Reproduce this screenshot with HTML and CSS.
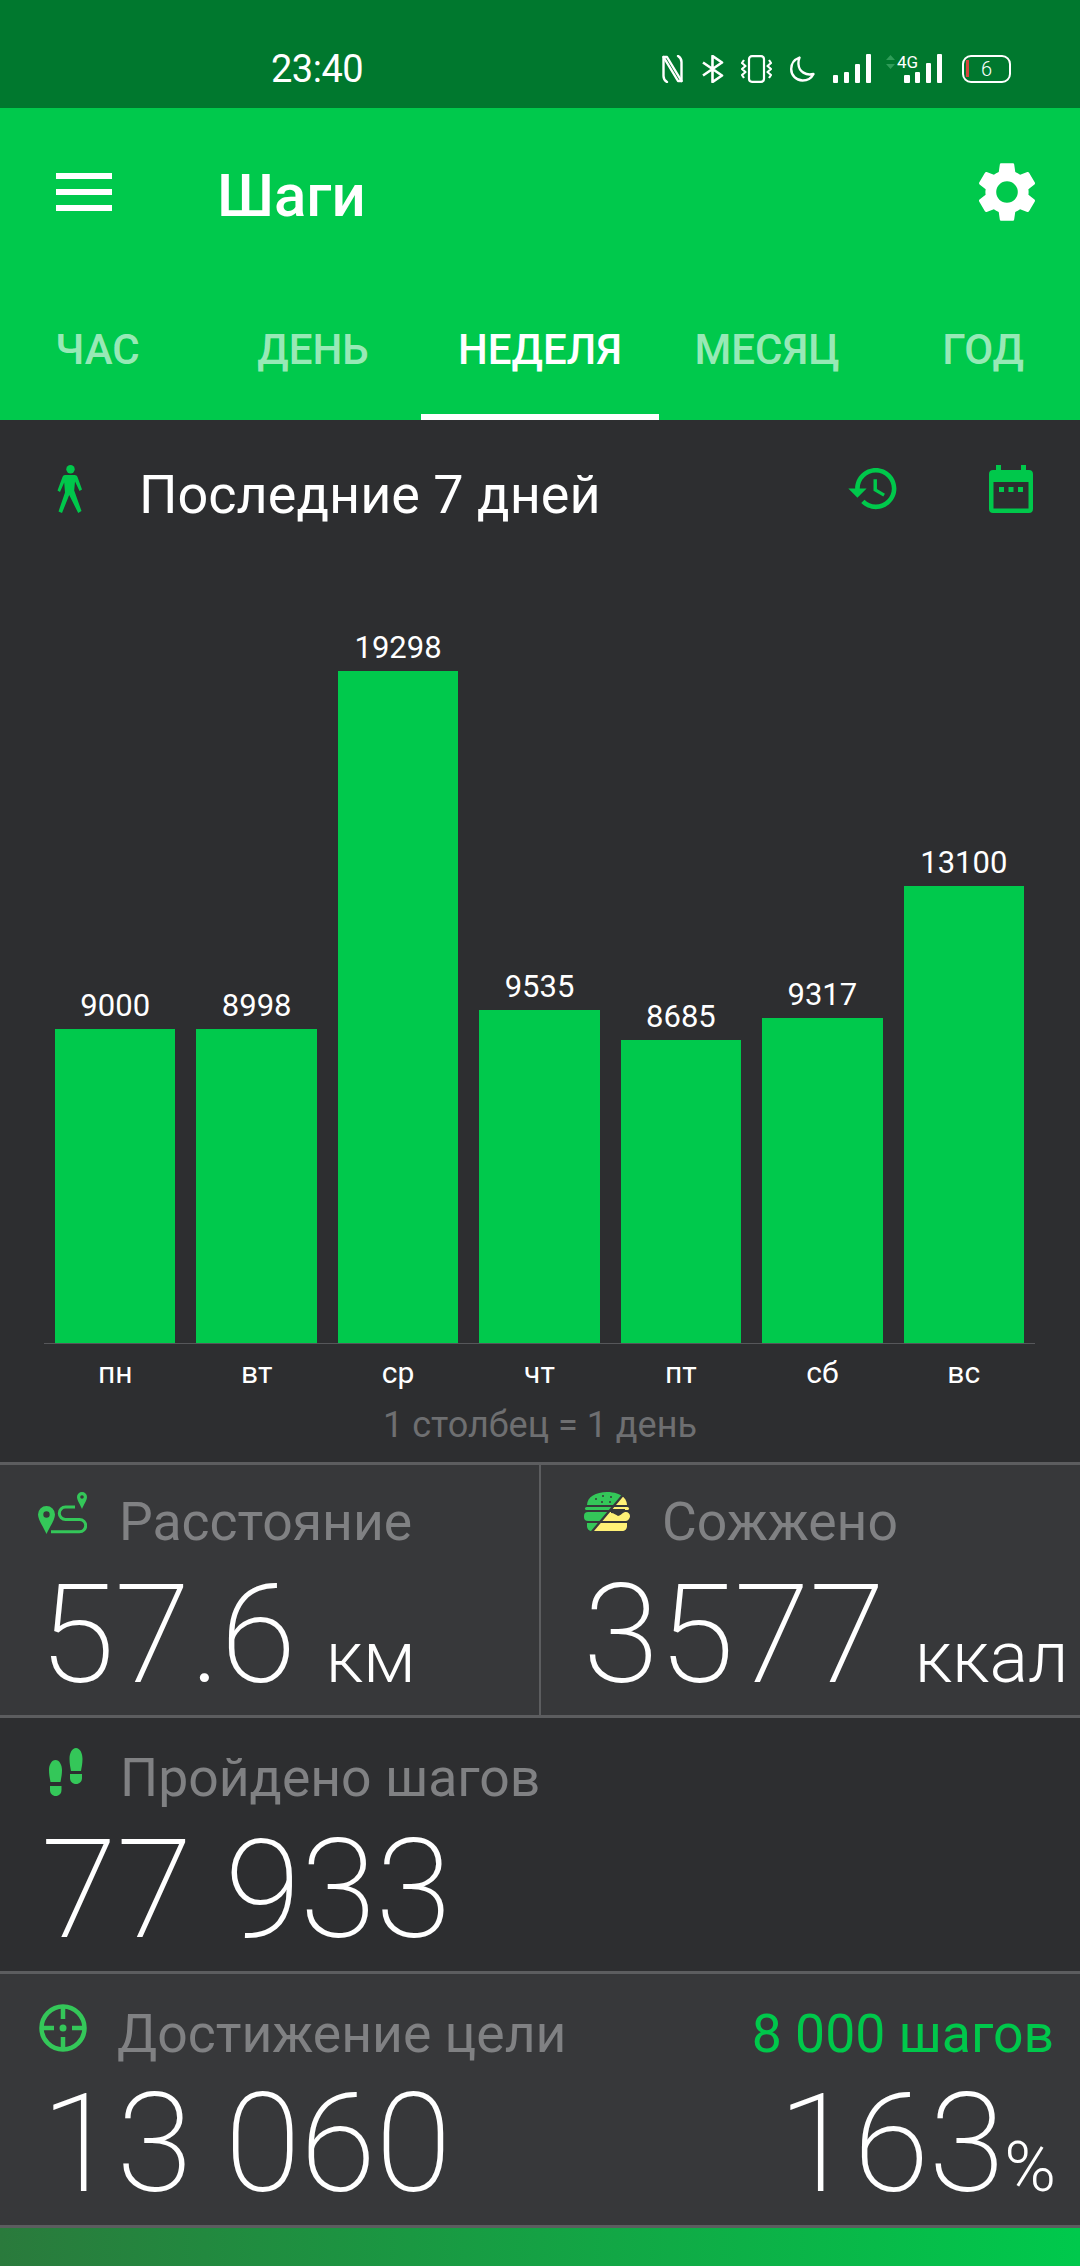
FILE: index.html
```html
<!DOCTYPE html>
<html lang="ru">

<head>
    <meta charset="UTF-8">
    <meta name="viewport" content="width=device-width, initial-scale=1.0">
    <title>Шаги</title>
    <link rel="stylesheet" href="styles.css">
</head>

<body>
    <div class="status-bar">
        <span class="clock">23:40</span>
        <div class="status-icons">
            <svg class="st-nfc" width="21" height="28" viewBox="0 0 21 28" fill="none" stroke="#fff" stroke-width="2.4" stroke-linecap="round" stroke-linejoin="round">
                <path d="M5 27C2.500 25.500 1.500 23.500 1.500 21V2H5L19.500 26"/>
                <path d="M16 1C18.500 2.500 19.500 4.500 19.500 7V26H16L1.500 2"/>
            </svg>
            <svg class="st-bt" width="23" height="28" viewBox="0 0 23 28" fill="none" stroke="#fff" stroke-width="2.600" stroke-linejoin="round">
                <path d="M2 7.500 21 20.500 11.500 27V1L21 7.500 2 20.500"/>
            </svg>
            <svg class="st-vib" width="31" height="28" viewBox="0 0 31 28" fill="none" stroke="#fff" stroke-width="2.200" stroke-linejoin="round">
                <rect x="8" y="1.200" width="15" height="25.600" rx="3"/>
                <path d="M3 5 1 8l3.500 3L1 14l3.500 3L1 20l2 3M28 5l2 3-3.500 3L30 14l-3.500 3L30 20l-2 3"/>
            </svg>
            <svg class="st-moon" width="25" height="26" viewBox="0 0 25 26" fill="none" stroke="#fff" stroke-width="2.400" stroke-linejoin="round">
                <path d="M9.500 1.500C3 4 1.200 9 1.200 13c0 6.500 5 11.500 11.300 11.500 5 0 9-2.500 11-6.500-7.500 2-14.500-2.500-15-9.500C8.300 6 8.700 3.500 9.500 1.500Z"/>
            </svg>
            <svg class="st-signal" width="38" height="29" viewBox="0 0 38 29" fill="#fff">
                <rect x="0" y="21" width="5" height="8" rx="1"/>
                <rect x="11" y="18" width="5" height="11" rx="1"/>
                <rect x="22" y="10" width="5" height="19" rx="1"/>
                <rect x="33" y="0" width="5" height="29" rx="1"/>
            </svg>
            <div class="st-net">
                <svg class="st-arrows" width="9" height="14" viewBox="0 0 9 14" fill="#2f9c58">
                    <path d="M4.500 0 9 5H0ZM0 9h9l-4.500 5Z"/>
                </svg>
                <span class="st-4g">4G</span>
                <svg class="st-bars" width="38" height="29" viewBox="0 0 38 29" fill="#fff">
                    <rect x="0" y="21" width="6" height="8" rx="1"/>
                    <rect x="11" y="18" width="5" height="11" rx="1"/>
                    <rect x="22" y="9" width="5" height="20" rx="1"/>
                    <rect x="33" y="0" width="5" height="29" rx="1"/>
                </svg>
            </div>
            <div class="battery">
                <span class="battery-low"></span>
                <span class="battery-num">6</span>
            </div>
        </div>
    </div>

    <div class="appbar">
        <div class="toolbar">
            <div class="menu-icon"><span></span><span></span><span></span></div>
            <h1 class="title">Шаги</h1>
            <svg class="gear" width="72" height="72" viewBox="0 0 24 24" fill="#fff">
                <path d="M19.14 12.94c.04-.3.06-.61.06-.94 0-.32-.02-.64-.07-.94l2.03-1.58c.18-.14.23-.41.12-.61l-1.92-3.32c-.12-.22-.37-.29-.59-.22l-2.39.96c-.5-.38-1.03-.7-1.62-.94l-.36-2.54c-.04-.24-.24-.41-.48-.41h-3.84c-.24 0-.43.17-.47.41l-.36 2.54c-.59.24-1.13.57-1.62.94l-2.39-.96c-.22-.08-.47 0-.59.22L2.74 8.87c-.12.21-.08.47.12.61l2.03 1.58c-.05.3-.09.63-.09.94s.02.64.07.94l-2.03 1.58c-.18.14-.23.41-.12.61l1.92 3.32c.12.22.37.29.59.22l2.39-.96c.5.38 1.03.7 1.62.94l.36 2.54c.05.24.24.41.48.41h3.84c.24 0 .44-.17.47-.41l.36-2.54c.59-.24 1.13-.56 1.62-.94l2.39.96c.22.08.47 0 .59-.22l1.92-3.32c.12-.22.07-.47-.12-.61l-2.01-1.58zM12 15.6c-1.98 0-3.6-1.62-3.6-3.6s1.62-3.6 3.6-3.6 3.6 1.62 3.6 3.6-1.62 3.6-3.6 3.6z"/>
            </svg>
        </div>
        <div class="tabs">
            <div class="tab tab-first">ЧАС</div>
            <div class="tab">ДЕНЬ</div>
            <div class="tab active">НЕДЕЛЯ</div>
            <div class="tab">МЕСЯЦ</div>
            <div class="tab tab-last">ГОД</div>
        </div>
    </div>

    <div class="chart-panel">
        <div class="period">
            <svg class="walker" width="25" height="48" viewBox="0 0 25 48" fill="#00c84b">
                <circle cx="13.500" cy="4.200" r="4.200"/>
                <path d="M8 10h9.500c1.500 0 2.500.8 3 2l4.500 12.500-2.500 1.500-4.500-9.500-.8 9L24.500 46l-3.300 2-9-18L5 48l-3.500-1.500 6.500-19-.8-10L3 27 .5 25.500 5.500 12C6 10.800 6.800 10 8 10Z"/>
            </svg>
            <span class="period-text">Последние 7 дней</span>
            <svg class="history" width="55" height="55" viewBox="0 0 24 24" fill="#00c84b">
                <path d="M13 3c-4.970 0-9 4.030-9 9H1l3.890 3.890.07.14L9 12H6c0-3.870 3.130-7 7-7s7 3.130 7 7-3.130 7-7 7c-1.930 0-3.680-.79-4.940-2.060l-1.420 1.420C8.270 19.990 10.510 21 13 21c4.970 0 9-4.030 9-9s-4.030-9-9-9zm-1 5v5l4.280 2.540.72-1.210-3.500-2.080V8H12z"/>
            </svg>
            <svg class="calendar" width="44" height="48" viewBox="0 0 44 48" fill="#00c84b">
                <path fill-rule="evenodd" d="M7 0h5v5h20V0h5v5h3c2.500 0 4 1.500 4 4v35c0 2.500-1.500 4-4 4H4c-2.500 0-4-1.500-4-4V9c0-2.500 1.500-4 4-4h3ZM4.500 17v26.500h35V17Z"/>
                <rect x="10" y="22" width="5" height="5"/>
                <rect x="19.500" y="22" width="5" height="5"/>
                <rect x="29" y="22" width="5" height="5"/>
            </svg>
        </div>

        <div class="plot">
            <div class="col"><span class="col-val">9000</span><div class="bar" style="height:314px"></div></div>
            <div class="col"><span class="col-val">8998</span><div class="bar" style="height:314px"></div></div>
            <div class="col"><span class="col-val">19298</span><div class="bar" style="height:672px"></div></div>
            <div class="col"><span class="col-val">9535</span><div class="bar" style="height:333px"></div></div>
            <div class="col"><span class="col-val">8685</span><div class="bar" style="height:303px"></div></div>
            <div class="col"><span class="col-val">9317</span><div class="bar" style="height:325px"></div></div>
            <div class="col"><span class="col-val">13100</span><div class="bar" style="height:457px"></div></div>
        </div>
        <div class="axis">
            <span>пн</span><span>вт</span><span>ср</span><span>чт</span><span>пт</span><span>сб</span><span>вс</span>
        </div>
        <div class="caption">1 столбец = 1 день</div>
    </div>

    <div class="stats">
        <div class="stat-row row-light row-split">
            <div class="stat-cell cell-left">
                <div class="stat-label">
                    <svg class="ic-route" width="49" height="42" viewBox="0 0 49 42">
                        <path fill="#34c759" fill-rule="evenodd" d="M8.500 14a8.500 8.500 0 0 1 8.500 8.500C17 28 11 36 8.500 42 6 36 0 28 0 22.500A8.500 8.500 0 0 1 8.500 14Zm0 5.300a3.200 3.200 0 1 0 0 6.400 3.200 3.200 0 0 0 0-6.400Z"/>
                        <path fill="#34c759" fill-rule="evenodd" d="M44 0a5 5 0 0 1 5 5c0 3.500-3.500 8-5 12-1.500-4-5-8.500-5-12a5 5 0 0 1 5-5Zm0 3.200a1.800 1.800 0 1 0 0 3.600 1.800 1.800 0 0 0 0-3.600Z"/>
                        <path fill="none" stroke="#34c759" stroke-width="3" d="M37 15H27.500a6.200 6.200 0 0 0 0 12.400h14a6.200 6.200 0 0 1 0 12.400H13"/>
                    </svg>
                    <span>Расстояние</span>
                </div>
                <div class="stat-value">57.6<span class="unit unit-km">км</span></div>
            </div>
            <div class="stat-cell cell-right">
                <div class="stat-label">
                    <svg class="ic-burger" width="46" height="39" viewBox="0 0 46 39">
                        <defs>
                            <clipPath id="burger-top"><path d="M0 0H40L7 39H0Z"/></clipPath>
                            <clipPath id="burger-bottom"><path d="M46 0H43L10 39H46Z"/></clipPath>
                        </defs>
                        <g clip-path="url(#burger-top)" fill="#34c759">
                            <path d="M3 13C3 5 12 0 23 0s20 5 20 13Z"/>
                            <rect x="1" y="15" width="44" height="3" rx="1.500"/>
                            <rect x="0" y="20" width="46" height="9" rx="4"/>
                            <path d="M3 31h40v3c0 3-2 5-5 5H8c-3 0-5-2-5-5Z"/>
                            <g fill="#37383a">
                                <circle cx="12" cy="7" r="1"/><circle cx="19" cy="4" r="1"/><circle cx="27" cy="5" r="1"/><circle cx="18" cy="10" r="1"/><circle cx="26" cy="10" r="1"/>
                            </g>
                        </g>
                        <g clip-path="url(#burger-bottom)" fill="#fff176">
                            <path d="M3 13C3 5 12 0 23 0s20 5 20 13Z"/>
                            <rect x="1" y="15" width="44" height="3" rx="1.500"/>
                            <path d="M0 24c0-2 2-4 4-4h38c2 0 4 2 4 4s-2 5-4 5H4c-2 0-4-3-4-5Z"/>
                            <path d="M3 31h40v3c0 3-2 5-5 5H8c-3 0-5-2-5-5Z"/>
                        </g>
                        <path fill="#37383a" d="M27 17h14v3c-3 1-5 4-7 4-2-1-4-3-7-3Z"/>
                    </svg>
                    <span>Сожжено</span>
                </div>
                <div class="stat-value">3577<span class="unit unit-kcal">ккал</span></div>
            </div>
        </div>

        <div class="stat-row row-dark">
            <div class="stat-label label-steps">
                <svg class="ic-steps" width="34" height="48" viewBox="0 0 34 48" fill="#34c759">
                    <path d="M27 0c4 0 6.500 5 6.500 11 0 5-1 9-1.500 12H22c-.5-3-1.500-7-1.500-12C20.500 5 23 0 27 0Z"/>
                    <path d="M21 26h12v4c0 3.500-2.500 6-6 6s-6-2.500-6-6Z"/>
                    <path d="M6.500 12C10.500 12 13 17 13 22c0 5-1 9-1.500 12h-10C1 31 0 27 0 22 0 17 2.500 12 6.500 12Z"/>
                    <path d="M1 38h11.500v4c0 3.500-2.500 6-5.800 6S1 45.500 1 42Z"/>
                </svg>
                <span>Пройдено шагов</span>
            </div>
            <div class="stat-value value-wide">77 933</div>
        </div>

        <div class="stat-row row-light row-goal">
            <div class="goal-top">
                <div class="stat-label label-goal">
                    <svg class="ic-target" width="48" height="48" viewBox="0 0 48 48" fill="none" stroke="#34c759" stroke-width="4.500">
                        <circle cx="24" cy="24" r="21.500"/>
                        <path d="M24 3v12M24 33v12M3 24h12M33 24h12"/>
                        <circle cx="24" cy="24" r="3.500" fill="#34c759" stroke="none"/>
                    </svg>
                    <span>Достижение цели</span>
                </div>
                <span class="goal-target">8 000 шагов</span>
            </div>
            <div class="goal-bottom">
                <div class="stat-value value-wide">13 060</div>
                <div class="stat-value value-pct">163<span class="unit unit-pct">%</span></div>
            </div>
        </div>
    </div>

    <div class="footer-strip"></div>
</body>

</html>
```

FILE: styles.css
```css
* {
    box-sizing: border-box;
}

body {
    margin: 0;
    width: 1080px;
    height: 2266px;
    overflow: hidden;
    font-family: Roboto, "Noto Sans", sans-serif;
    background-color: #2d2e30;
    color: #fff;
}

/* status bar */
.status-bar {
    display: flex;
    align-items: center;
    height: 108px;
    padding: 29px 69px 0 271px;
    background-color: #00782e;
}

.clock {
    font-size: 38px;
    letter-spacing: -0.5px;
}

.status-icons {
    display: flex;
    align-items: center;
    margin-left: auto;
    gap: 18px;
}

.st-bt {
    margin-right: -1px;
}

.st-net {
    display: flex;
    align-items: flex-end;
    position: relative;
    width: 56px;
    height: 29px;
    margin-left: -3px;
    justify-content: flex-end;
}

.st-arrows {
    position: absolute;
    left: 0;
    top: 1px;
}

.st-4g {
    position: absolute;
    left: 11px;
    top: -2px;
    font-size: 17px;
    line-height: 20px;
}

.battery {
    display: flex;
    align-items: center;
    justify-content: center;
    position: relative;
    width: 49px;
    height: 28px;
    border: 2.5px solid #fff;
    border-radius: 9px;
    margin-left: 2px;
}

.battery-low {
    position: absolute;
    left: 2px;
    top: 3px;
    width: 3px;
    height: 17px;
    background-color: #d5453c;
}

.battery-num {
    font-size: 20px;
    font-weight: 300;
    line-height: 22px;
}

/* top bar */
.appbar {
    height: 312px;
    background-color: #00c94c;
}

.toolbar {
    display: flex;
    align-items: center;
    height: 168px;
    padding: 0 37px 0 56px;
}

.menu-icon {
    display: flex;
    flex-direction: column;
    gap: 10px;
    width: 56px;
    margin-top: -1px;
}

.menu-icon span {
    height: 6px;
    background-color: #fff;
}

.title {
    margin: 6px 0 0 105px;
    font-size: 60px;
    font-weight: 500;
}

.gear {
    margin-left: auto;
}

.tabs {
    display: grid;
    grid-template-columns: 205px 216px 238px 216px 205px;
    height: 144px;
}

.tab {
    display: flex;
    align-items: center;
    justify-content: center;
    padding-top: 2px;
    height: 144px;
    font-size: 42px;
    font-weight: 500;
    color: rgba(255, 255, 255, 0.62);
}

.tab-first {
    padding-right: 10px;
}

.tab-last {
    padding-left: 11px;
}

.tab.active {
    padding-top: 8px;
    color: #fff;
    border-bottom: 6px solid #fff;
}

/* chart */
.chart-panel {
    height: 1042px;
}

.period {
    display: flex;
    align-items: flex-start;
    height: 100px;
    padding: 45px 47px 0 57px;
}

.period-text {
    margin: 0 0 0 57px;
    font-size: 54px;
    line-height: 60px;
    flex: 1;
}

.history {
    margin-top: -4px;
    margin-right: 88px;
}

.plot {
    display: grid;
    grid-template-columns: repeat(7, 1fr);
    column-gap: 21px;
    align-items: end;
    height: 823px;
    padding: 0 56px 0 55px;
}

.col {
    display: flex;
    flex-direction: column;
    align-items: center;
}

.col-val {
    font-size: 31px;
    line-height: 36px;
    margin-bottom: 5px;
}

.bar {
    width: 100%;
    background-color: #00c94c;
}

.axis {
    display: grid;
    grid-template-columns: repeat(7, 1fr);
    column-gap: 21px;
    height: 50px;
    margin: 0 45px 0 44px;
    padding: 11px 11px 0;
    border-top: 1px solid #56575a;
    font-size: 30px;
    line-height: 36px;
    text-align: center;
}

.caption {
    padding-top: 12px;
    font-size: 36px;
    line-height: 40px;
    color: #6e6f71;
    text-align: center;
}

/* stat rows */
.stats {
    display: flex;
    flex-direction: column;
}

.stat-row {
    border-top: 3px solid #5c5d5f;
}

.row-light {
    background-color: #37383a;
}

.row-dark {
    background-color: #2d2e30;
    height: 256px;
}

.row-split {
    display: flex;
    height: 253px;
}

.row-goal {
    height: 254px;
}

.stat-cell {
    height: 100%;
}

.cell-left {
    width: 541px;
    border-right: 2px solid #5c5d5f;
    padding-left: 38px;
}

.cell-right {
    flex: 1;
    padding-left: 43px;
    white-space: nowrap;
}

.stat-label {
    display: flex;
    align-items: flex-start;
    height: 102px;
    padding-top: 30px;
    font-size: 53.5px;
    line-height: 60px;
    color: #808183;
}

.stat-label svg {
    margin-right: 32px;
}

.stat-cell .stat-label {
    padding-top: 27px;
}

.stat-value {
    font-size: 138px;
    font-weight: 220;
    line-height: 136px;
    letter-spacing: -0.5px;
    white-space: nowrap;
}

.cell-left .stat-value {
    margin-left: 1px;
}

.cell-right .stat-value {
    margin-left: -1px;
}

.unit {
    font-size: 72px;
    line-height: 72px;
    font-weight: 300;
    letter-spacing: 0;
}

.unit-km {
    margin-left: 30px;
}

.unit-kcal {
    margin-left: 30px;
}

.label-steps {
    height: 104px;
    padding-left: 49px;
}

.label-steps svg {
    margin-right: 37px;
}

.label-goal {
    padding-left: 39px;
}

.label-goal svg {
    margin-right: 30px;
}

.value-wide {
    margin-left: 41px;
}

.goal-top {
    display: flex;
    justify-content: space-between;
    padding-right: 26px;
}

.goal-target {
    padding-top: 30px;
    font-size: 53.5px;
    line-height: 60px;
    color: #00c84b;
}

.goal-bottom {
    display: flex;
    justify-content: space-between;
    padding-right: 24px;
}

.unit-pct {
    font-size: 70px;
}

.footer-strip {
    height: 41px;
    border-top: 3px solid #5c5d5f;
    background: linear-gradient(to right, #2a7a3c, #00c94c);
}
```
